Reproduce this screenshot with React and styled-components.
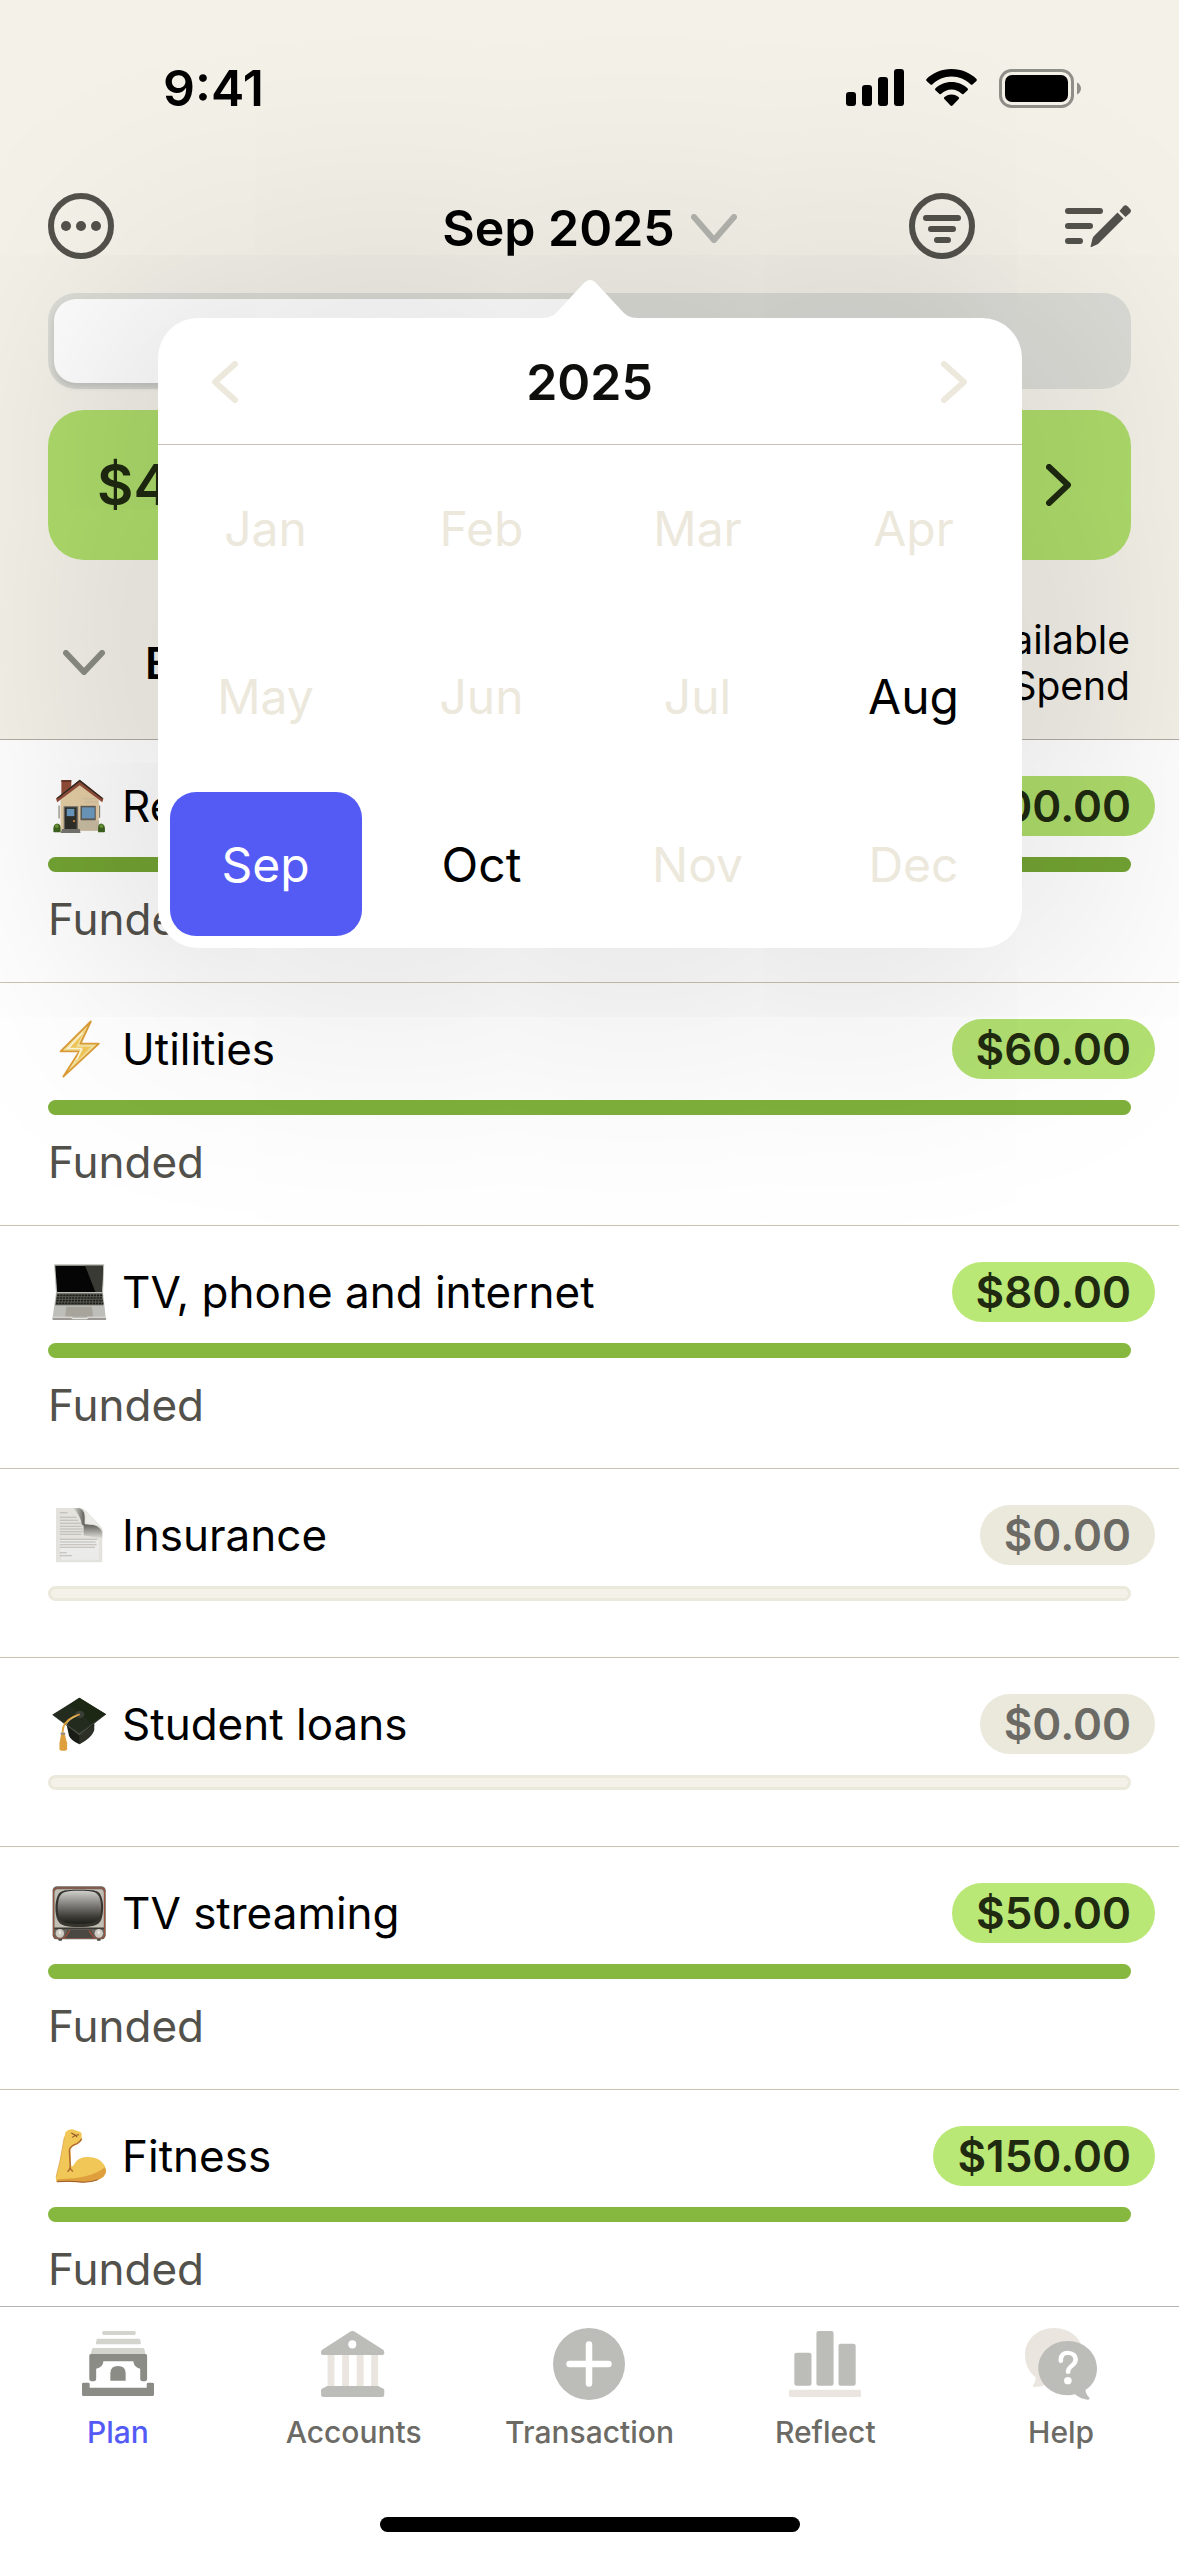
import React, { useState } from 'react';
import styled, { createGlobalStyle, css } from 'styled-components';

const GlobalStyle = createGlobalStyle`
  * {
    box-sizing: border-box;
  }

  body {
    margin: 0;
    font-family: Inter, 'Liberation Sans', sans-serif;
    color: #000;
    background: #fff;
  }

  button {
    padding: 0;
    border: 0;
    background: none;
    font: inherit;
    color: inherit;
    cursor: pointer;
  }

  svg {
    display: block;
    flex: none;
  }
`;

const Screen = styled.div`
  display: flex;
  flex-direction: column;
  height: 100vh;
  overflow: hidden;
`;

const Header = styled.header`
  position: relative;
  z-index: 1;
  flex: none;
  border-bottom: 1px solid #b3aaa2;
  background: #f4f1e9;
`;

const StatusBar = styled.div`
  display: flex;
  align-items: center;
  justify-content: space-between;
  height: 176px;
  padding: 0 98px 0 163px;
`;

const Time = styled.time`
  font-size: 50px;
  font-weight: 600;
  line-height: 60px;
`;

const StatusIcons = styled.div`
  display: flex;
  align-items: center;
  gap: 22px;
`;

const NavBar = styled.nav`
  position: relative;
  z-index: 2;
  display: grid;
  grid-template-columns: 1fr auto 1fr;
  align-items: center;
  height: 100px;
  padding: 0 48px;
`;

const MonthButton = styled.button`
  display: flex;
  align-items: center;
  gap: 16px;
  padding-top: 4px;
  font-size: 50px;
  font-weight: 600;
  line-height: 60px;
`;

const NavActions = styled.div`
  display: flex;
  align-items: center;
  justify-content: ${({ $end }) => ($end ? 'flex-end' : 'flex-start')};
  gap: 90px;
`;

const Popover = styled.div`
  position: absolute;
  top: 142px;
  left: 0;
  right: 0;
  width: 864px;
  max-width: calc(100% - 48px);
  margin: 0 auto;
  border-radius: 40px;
  background: #fff;
  box-shadow: 0 0 330px 42px rgba(0, 0, 0, 0.16);
`;

const PopoverArrow = styled.svg`
  position: absolute;
  top: -38px;
  left: 0;
  right: 0;
  margin: 0 auto;
`;

const YearBar = styled.div`
  display: flex;
  align-items: center;
  justify-content: space-between;
  height: 126px;
  padding: 2px 54px 0;
  box-shadow: 0 1px 0 #c9c0b8;
`;

const Year = styled.h2`
  margin: 0;
  font-size: 50px;
  font-weight: 600;
  line-height: 60px;
  color: #0e0e0c;
`;

const Months = styled.div`
  display: grid;
  grid-template-columns: repeat(4, 1fr);
  gap: 24px;
  padding: 12px;
`;

const Month = styled.button`
  height: 144px;
  border-radius: 26px;
  font-size: 48px;
  color: #000;

  &:disabled {
    color: #ece8dc;
    cursor: default;
  }

  ${({ $selected }) =>
    $selected &&
    css`
      color: #fff;
      background: #545bf5;
    `}
`;

const Segments = styled.div`
  display: grid;
  grid-template-columns: repeat(2, 1fr);
  height: 96px;
  margin: 17px 48px 21px;
  padding: 6px;
  border-radius: 28px;
  background: #dcdcd7;
`;

const Segment = styled.button`
  border-radius: 22px;
  background: ${({ $selected }) => ($selected ? '#fff' : 'transparent')};
  box-shadow: ${({ $selected }) => ($selected ? '0 4px 6px rgba(0, 0, 0, 0.12)' : 'none')};
`;

const Banner = styled.button`
  display: flex;
  align-items: center;
  justify-content: space-between;
  width: calc(100% - 96px);
  height: 150px;
  margin: 0 48px;
  padding: 0 60px 0 49px;
  border-radius: 36px;
  font-size: 56px;
  font-weight: 600;
  color: #1f2a10;
  background: #aedc6b;
`;

const GroupHeader = styled.div`
  display: flex;
  align-items: center;
  justify-content: space-between;
  height: 179px;
  padding: 26px 49px 0 63px;
`;

const GroupToggle = styled.button`
  display: flex;
  align-items: center;
  gap: 40px;
  font-size: 44px;
  font-weight: 600;
`;

const ColumnTitle = styled.div`
  font-size: 39px;
  line-height: 46px;
  text-align: right;
`;

const List = styled.ul`
  flex: 1;
  min-height: 0;
  margin: 0;
  padding: 0;
  overflow-y: auto;
  scrollbar-width: none;
  list-style: none;
`;

const Row = styled.li`
  padding: 36px 24px 36px 48px;
  border-bottom: 1px solid #c9c3b2;
`;

const RowTop = styled.div`
  display: flex;
  align-items: center;
  height: 60px;
  margin-bottom: 21px;
`;

const RowName = styled.span`
  flex: 1;
  margin-left: 14px;
  font-size: 44px;
  line-height: 54px;
`;

const tones = {
  shaded: { pill: '#aedc6b', bar: '#73a433' },
  dim: { pill: '#b2e071', bar: '#7fb03c' },
  funded: { pill: '#bae876', bar: '#86b840' },
};

const Pill = styled.button`
  height: 60px;
  padding: 0 24px;
  border-radius: 30px;
  font-size: 44px;
  font-weight: 600;
  line-height: 60px;
  color: ${({ $tone }) => ($tone ? '#1f2a10' : '#6b6a65')};
  background: ${({ $tone }) => ($tone ? tones[$tone].pill : '#ebe8dc')};
`;

const Bar = styled.div`
  height: 15px;
  margin-right: 24px;
  border-radius: 8px;
  ${({ $tone }) =>
    $tone
      ? css`
          background: ${tones[$tone].bar};
        `
      : css`
          margin-bottom: 20px;
          border: 3px solid #ebe8dc;
          background: #f4f1e9;
        `}
`;

const Caption = styled.p`
  margin: 20px 0 0;
  font-size: 44px;
  line-height: 54px;
  color: #52514b;
`;

const TabBar = styled.nav`
  flex: none;
  border-top: 1px solid #b3b3b0;
  background: #fff;
`;

const Tabs = styled.div`
  display: grid;
  grid-template-columns: repeat(5, 1fr);
  padding: 21px 0 58px;
`;

const Tab = styled.a`
  display: flex;
  flex-direction: column;
  align-items: center;
  gap: 14px;
  font-size: 30px;
  font-weight: 500;
  line-height: 36px;
  text-decoration: none;
  color: ${({ $active }) => ($active ? '#545bf5' : '#6b6a65')};
`;

const HomeIndicator = styled.div`
  width: 420px;
  height: 15px;
  margin: 9px auto 24px;
  border-radius: 8px;
  background: #000;
`;

const Chevron = ({ dir, color, width, height }) => {
  const w = width - 6;
  const h = height - 6;
  const paths = {
    down: `M3 3 L${3 + w / 2} ${3 + h} L${3 + w} 3`,
    right: `M3 3 L${3 + w} ${3 + h / 2} L3 ${3 + h}`,
    left: `M${3 + w} 3 L3 ${3 + h / 2} L${3 + w} ${3 + h}`,
  };
  return (
    <svg width={width} height={height} fill="none" stroke={color} strokeWidth="6" strokeLinecap="round" strokeLinejoin="round">
      <path d={paths[dir]} />
    </svg>
  );
};

const SignalIcon = () => (
  <svg width="58" height="38" viewBox="0 0 58 38">
    <rect x="0" y="23" width="10" height="14" rx="3" />
    <rect x="16" y="16" width="10" height="21" rx="3" />
    <rect x="32" y="8" width="10" height="29" rx="3" />
    <rect x="48" y="0" width="10" height="37" rx="3" />
  </svg>
);

const WifiIcon = () => (
  <svg width="51" height="38" viewBox="0 0 51 38">
    <path d="M25.500 0C35.500 0 44.500 4 50.500 10Q51.200 11 50.400 12L46.500 15.600Q45.500 16.200 44.500 15.300C39.500 10.500 33 7.500 25.500 7.500S11.500 10.500 6.500 15.300Q5.500 16.200 4.500 15.600L.600 12Q-.2 11 .5 10C6.500 4 15.500 0 25.500 0Z" />
    <path d="M25.500 13C32 13 37.500 15.500 41.700 19.500Q42.400 20.400 41.600 21.300L37.500 25Q36.600 25.500 35.700 24.800C33 22.200 29.500 20.500 25.500 20.500S18 22.200 15.300 24.800Q14.400 25.500 13.500 25L9.400 21.300Q8.600 20.400 9.300 19.500C13.500 15.500 19 13 25.500 13Z" />
    <path d="M25.500 25.500C28.500 25.500 31 26.700 32.800 28.300Q33.500 29.200 32.700 30.100L26.500 36.500Q25.500 37.400 24.500 36.500L18.300 30.100Q17.500 29.200 18.200 28.300C20 26.700 22.500 25.500 25.500 25.500Z" />
  </svg>
);

const BatteryIcon = () => (
  <svg width="82" height="39" viewBox="0 0 82 39">
    <rect x="1.500" y="1.500" width="72" height="36" rx="11" fill="none" stroke="#8f8e89" strokeWidth="3" />
    <rect x="6" y="6" width="63" height="27" rx="7" />
    <path d="M78 13.500C80.500 14.500 82 17 82 19.500S80.500 24.500 78 25.500Z" fill="#8f8e89" />
  </svg>
);

const MoreIcon = () => (
  <svg width="66" height="66" viewBox="0 0 66 66" fill="#52514c">
    <circle cx="33" cy="33" r="30" fill="none" stroke="#52514c" strokeWidth="6" />
    <circle cx="18" cy="33" r="5" />
    <circle cx="33" cy="33" r="5" />
    <circle cx="48" cy="33" r="5" />
  </svg>
);

const FilterIcon = () => (
  <svg width="66" height="66" viewBox="0 0 66 66" fill="#52514c">
    <circle cx="33" cy="33" r="30" fill="none" stroke="#52514c" strokeWidth="6" />
    <rect x="14" y="22" width="38" height="6" rx="3" />
    <rect x="19" y="33" width="28" height="6" rx="3" />
    <rect x="25" y="44" width="17" height="6" rx="3" />
  </svg>
);

const EditIcon = () => (
  <svg width="66" height="66" viewBox="0 0 66 66" fill="#52514c">
    <rect x="0" y="15" width="38" height="6" rx="3" />
    <rect x="0" y="30" width="28" height="6" rx="3" />
    <rect x="0" y="45" width="18" height="6" rx="3" />
    <path d="M25.500 54L27.500 45.500Q28 44 29 43L52.500 19.500L58.500 25.500L35 49Q34 50.500 32.500 51.200L26.500 54Z" />
    <path d="M54.500 18L58.500 13.200Q60.500 11.500 62.500 13.200L65.200 16Q66.800 18 65 20L60.500 24Z" />
  </svg>
);

const Emoji = ({ viewBox, label, children }) => (
  <svg width="60" height="60" viewBox={viewBox} preserveAspectRatio="none" role="img" aria-label={label}>
    {children}
  </svg>
);

const HouseEmoji = () => (
  <Emoji viewBox="125 1035 157 157" label="House">
    <path d="M160 1046h26v18l-26 22z" fill="#924c38" />
    <path d="M160 1046h26v4h-26z" fill="#5b2c20" />
    <path d="M158 1098L208 1055L258 1098V1178H158Z" fill="#e3cda5" />
    <path d="M206 1152H258V1178H206Z" fill="#c9bda4" />
    <path d="M146 1094L208 1045L270 1094L267 1104L208 1059L149 1104Z" fill="#924c38" />
    <path d="M146 1094L208 1045L270 1094L264 1093L208 1050L152 1093Z" fill="#2f2c24" />
    <path d="M216 1095h34M220 1103h34" stroke="#c9bda4" strokeWidth="2" />
    <path d="M154 1112v34M260 1112v32" stroke="#8d877b" strokeWidth="3" />
    <rect x="166" y="1114" width="38" height="62" fill="#77716a" />
    <rect x="169" y="1117" width="31" height="57" fill="#30302a" />
    <rect x="174" y="1121" width="20" height="19" fill="#6d9ac0" />
    <circle cx="193" cy="1153" r="3" fill="#d8893c" />
    <rect x="210" y="1113" width="40" height="38" fill="#5f5d58" />
    <rect x="214" y="1117" width="33" height="29" fill="#6d9ac0" />
    <path d="M162 1174H208L210 1184H158Z" fill="#777570" />
    <path d="M139 1181Q137 1160 149 1159Q158 1160 158 1171V1182H141Z" fill="#3f6420" />
    <path d="M274 1181Q276 1160 264 1159Q256 1160 256 1171V1182H272Z" fill="#3f6420" />
    <circle cx="148" cy="1166" r="5" fill="#6c9a35" />
    <circle cx="265" cy="1166" r="5" fill="#6c9a35" />
  </Emoji>
);

const BoltEmoji = () => (
  <Emoji viewBox="125 117 157 180" label="Lightning bolt">
    <path d="M237 124L158 214H207L165 290L258 191H210Z" fill="#f3e3a0" stroke="#dc9d38" strokeWidth="5" strokeLinejoin="round" />
    <path d="M222 149L199 200H238L196 250L217 208H178Z" fill="#f1c75a" />
    <path d="M216 158L178 205H213L200 240" fill="none" stroke="#fbf6d8" strokeWidth="4" />
  </Emoji>
);

const LaptopEmoji = () => (
  <Emoji viewBox="125 846 157 180" label="Laptop">
    <path d="M141 853H272L269 940H146Z" fill="#b9b8b2" />
    <path d="M144 857H269L266 936H149Z" fill="#050505" />
    <path d="M222 857H269L266 936H249Z" fill="#3a3a34" />
    <path d="M146 937H269L276 1014H137Z" fill="#bdbdb9" />
    <path d="M148 940H267L270 976H144Z" fill="#5d5d56" />
    <path d="M149 946H267M148 954H268M147 962H269M146 970H270" stroke="#1d1d19" strokeWidth="5" strokeDasharray="6 2" />
    <path d="M173 980H240L243 1010H170Z" fill="#a7a49c" />
    <path d="M137 1012H186L190 1016H226L230 1012H277V1020H137Z" fill="#9a9993" />
    <path d="M137 1012H186L190 1016H226L230 1012H277" fill="none" stroke="#e5e4df" strokeWidth="3" />
  </Emoji>
);

const PageEmoji = () => (
  <Emoji viewBox="125 135 157 180" label="Page with curl">
    <defs>
      <linearGradient id="curl" x1="0" y1="0" x2="0" y2="1">
        <stop offset="0" stopColor="#5d5d58" />
        <stop offset="1" stopColor="#e2e1dc" />
      </linearGradient>
      <linearGradient id="fold" x1="0" y1="0" x2="1" y2="0">
        <stop offset="0" stopColor="#e2e1dc" />
        <stop offset="1" stopColor="#5d5d58" />
      </linearGradient>
    </defs>
    <path d="M146 144H206Q216 146 221 154L267 207V307H146Z" fill="#e3e2dc" />
    <path d="M154 240H258V299H160Z" fill="#ebebe9" />
    <path d="M156 158h20M156 172h44M156 181h48M156 190h56M156 199h58M156 207h60M156 215h60M156 223h56M156 238h98M156 246h94M156 254h96M156 262h92M156 278h18M156 287h32" stroke="#bab9b3" strokeWidth="3" />
    <path d="M190 144H206Q220 147 221 168V196H214Q210 165 190 144Z" fill="url(#fold)" />
    <path d="M218 192L250 196Q267 202 267 218V236L218 226Z" fill="url(#curl)" />
    <path d="M206 144Q222 149 222 168V192Q258 190 267 216Q267 205 262 199L226 155Q217 145 206 144Z" fill="#ecebe7" stroke="#c7c6c0" strokeWidth="1" />
  </Emoji>
);

const CapEmoji = () => (
  <Emoji viewBox="125 702 157 180" label="Graduation cap">
    <path d="M173 790L246 788V810Q242 826 207 853Q186 842 180 828Z" fill="#181c14" />
    <path d="M207 824V853Q238 834 244 815L246 795Z" fill="#2d3026" />
    <path d="M207 713L277 763L207 824L136 764Z" fill="#232a1e" />
    <path d="M207 713L277 763L240 790L180 735Z" fill="#1d2814" />
    <path d="M136 764L207 820L277 763L207 826Z" fill="#4a4d45" />
    <ellipse cx="208" cy="763" rx="12" ry="11" fill="#3c3e38" />
    <path d="M208 763Q172 776 165 802L163 818" fill="none" stroke="#e1a23c" strokeWidth="5" />
    <path d="M200 768Q178 779 172 796" fill="none" stroke="#f4d98c" strokeWidth="2" />
    <path d="M160 818H168L175 850V869Q165 876 155 869V850Z" fill="#dda03c" />
    <path d="M158 818h12v6h-12z" fill="#8d8a80" />
  </Emoji>
);

const TvEmoji = () => (
  <Emoji viewBox="125 129 157 180" label="Television">
    <defs>
      <linearGradient id="tube" x1="0" y1="0" x2="0" y2="1">
        <stop offset="0" stopColor="#cfcfcc" />
        <stop offset="0.45" stopColor="#7b7a76" />
        <stop offset="0.8" stopColor="#3b3a35" />
        <stop offset="1" stopColor="#20201a" />
      </linearGradient>
    </defs>
    <path d="M150 292h14l-3 10h-8zM251 292h14l-3 10h-8z" fill="#45443e" />
    <rect x="137" y="139" width="139" height="159" rx="12" fill="#6a6760" />
    <rect x="140" y="144" width="133" height="150" rx="9" fill="none" stroke="#9c513d" strokeWidth="3" />
    <path d="M148 148H265Q271 150 271 158V262H142V158Q142 150 148 148Z" fill="#c1beb4" />
    <path d="M207 149C250 149 258 152 264 168C272 190 270 222 264 240C256 258 240 261 207 261C172 261 158 258 150 240C143 222 142 190 150 168C156 152 164 149 207 149Z" fill="#35342e" />
    <path d="M207 152C245 152 252 156 259 170C266 190 265 216 259 233C252 248 238 251 207 251C174 251 162 248 155 233C149 216 149 190 155 170C162 156 170 152 207 152Z" fill="url(#tube)" />
    <path d="M142 264H271V268H142Z" fill="#3c3b35" />
    <path d="M176 270H238L248 294H166Z" fill="#494842" />
    <path d="M182 271L168 294M232 271L246 294" stroke="#9c513d" strokeWidth="4" />
    <ellipse cx="156" cy="280" rx="11" ry="13" fill="#cfccc4" />
    <ellipse cx="258" cy="280" rx="11" ry="13" fill="#cfccc4" />
    <path d="M156 272v10M258 272v10" stroke="#fff" strokeWidth="3" />
  </Emoji>
);

const BicepsEmoji = () => (
  <Emoji viewBox="125 858 157 180" label="Flexed biceps">
    <path
      d="M171 876Q180 866 189 868L210 876Q215 881 213 890L214 900Q210 907 201 913Q186 919 184 930L185 975Q188 985 196 968Q205 951 229 951Q260 952 272 974Q282 996 270 1010Q250 1028 215 1027L148 1025Q145 1024 146 1012L157 960Q163 920 168 890Z"
      fill="#f1c757"
    />
    <path d="M150 1018Q200 1016 225 1008Q255 1000 274 982Q281 998 270 1010Q250 1028 215 1027L148 1025Z" fill="#df9f3c" />
    <path d="M148 1025Q190 1022 215 1027Q238 1027 256 1019" fill="none" stroke="#9a5a2c" strokeWidth="3" />
    <path d="M213 896Q208 907 201 911Q183 918 181 930L183 975Q184 988 176 995M183 985L190 995" fill="none" stroke="#b06a30" strokeWidth="4" />
    <path d="M186 879L197 886L188 892M197 886L206 884M197 886L201 892" fill="none" stroke="#8c5427" strokeWidth="3" />
    <path d="M168 890L157 960L146 1012" fill="none" stroke="#dc9d40" strokeWidth="2" />
  </Emoji>
);

const TabIcon = ({ viewBox, children }) => (
  <svg width="72" height="72" viewBox={viewBox} preserveAspectRatio="none" aria-hidden="true">
    {children}
  </svg>
);

const PlanIcon = () => (
  <TabIcon viewBox="214 84 188 216">
    <rect x="267" y="93" width="87" height="12" rx="4" fill="#d4d4cf" />
    <path d="M255 116H363Q366 116 366 120L368 129Q368 133 364 133H253Q250 133 250 129L252 120Q252 116 255 116Z" fill="#d4d4cf" />
    <path d="M244 144H373Q376 144 377 148L380 163H237L240 148Q241 144 244 144Z" fill="#d4d4cf" />
    <path d="M237 162H380Q384 162 384 167V236Q384 244 375 244Q366 244 366 236V206Q350 204 348 184H270Q268 204 251 206V236Q251 244 242 244Q233 244 233 236V167Q233 162 237 162Z" fill="#8b8c85" />
    <path d="M288 242V220Q288 198 308 198Q328 198 328 220V242Z" fill="#8b8c85" />
    <path d="M218 248H230Q234 248 234 252V263H383V252Q383 248 387 248H398Q402 248 402 252V284Q402 288 398 288H218Q214 288 214 284V252Q214 248 218 248Z" fill="#8b8c85" />
  </TabIcon>
);

const AccountsIcon = () => (
  <TabIcon viewBox="828 84 188 216">
    <path d="M853 160h18v100h-18zM891 160h18v100h-18zM929 160h18v100h-18zM967 160h18v100h-18z" fill="#eae6df" />
    <path d="M914 94Q918 92 922 94L998 149Q1001 152 1001 156V160Q1001 165 996 165H841Q836 165 836 160V156Q836 152 839 149Z" fill="#bcbcb9" />
    <ellipse cx="917.500" cy="133" rx="10.500" ry="12.500" fill="#fff" />
    <path d="M852 258H985L999 266Q1001 268 1001 271V285Q1001 291 995 291H842Q836 291 836 285V271Q836 268 838 266Z" fill="#bcbcb9" />
  </TabIcon>
);

const AddIcon = () => (
  <TabIcon viewBox="0 0 72 72">
    <circle cx="36" cy="36" r="36" fill="#bcbcb9" />
    <path d="M36 16.500V55.500M16.500 36H55.500" stroke="#fff" strokeWidth="6.500" strokeLinecap="round" />
  </TabIcon>
);

const ReflectIcon = () => (
  <TabIcon viewBox="546 84 189 216">
    <g fill="#bcbcb9">
      <rect x="560" y="158" width="45" height="99" rx="6" />
      <rect x="618" y="93" width="45" height="164" rx="6" />
      <rect x="676" y="131" width="45" height="126" rx="6" />
    </g>
    <rect x="546" y="269" width="189" height="22" rx="4" fill="#eae6df" />
  </TabIcon>
);

const HelpIcon = () => (
  <TabIcon viewBox="1162 84 189 216">
    <path d="M1238 84C1282 84 1315 118 1315 164C1315 212 1280 243 1238 243C1222 252 1205 261 1188 261Q1181 261 1184 255Q1191 244 1190 232C1172 216 1162 192 1162 164C1162 118 1196 84 1238 84Z" fill="#eae6df" />
    <path d="M1274 123C1317 123 1351 159 1351 205C1351 232 1340 256 1321 269Q1320 280 1331 293Q1333 300 1326 299Q1308 297 1293 283Q1284 286 1274 286C1231 286 1197 250 1197 205C1197 159 1231 123 1274 123Z" fill="#bcbcb9" />
    <path d="M1256 183V178Q1257 158 1275 158Q1295 160 1295 179Q1294 191 1284 198Q1275 206 1275 216" fill="none" stroke="#fff" strokeWidth="12" strokeLinecap="round" />
    <ellipse cx="1274.500" cy="242" rx="10" ry="11" fill="#fff" />
  </TabIcon>
);

const months = ['Jan', 'Feb', 'Mar', 'Apr', 'May', 'Jun', 'Jul', 'Aug', 'Sep', 'Oct', 'Nov', 'Dec'];
const enabledMonths = ['Aug', 'Sep', 'Oct'];

const categories = [
  { name: 'Rent', Icon: HouseEmoji, amount: '$1,200.00', tone: 'shaded' },
  { name: 'Utilities', Icon: BoltEmoji, amount: '$60.00', tone: 'dim' },
  { name: 'TV, phone and internet', Icon: LaptopEmoji, amount: '$80.00', tone: 'funded' },
  { name: 'Insurance', Icon: PageEmoji, amount: '$0.00' },
  { name: 'Student loans', Icon: CapEmoji, amount: '$0.00' },
  { name: 'TV streaming', Icon: TvEmoji, amount: '$50.00', tone: 'funded' },
  { name: 'Fitness', Icon: BicepsEmoji, amount: '$150.00', tone: 'funded' },
];

const tabs = [
  { name: 'Plan', Icon: PlanIcon },
  { name: 'Accounts', Icon: AccountsIcon },
  { name: 'Transaction', Icon: AddIcon },
  { name: 'Reflect', Icon: ReflectIcon },
  { name: 'Help', Icon: HelpIcon },
];

const MonthPicker = ({ selected, onSelect }) => (
  <Popover role="dialog" aria-label="Choose a month">
    <PopoverArrow width="96" height="39" viewBox="0 0 96 39" fill="#fff">
      <path d="M0 39V38C9 38 12 35 16 31L41 4Q48 -4 55 4L80 31C84 35 87 38 96 38V39Z" />
    </PopoverArrow>
    <YearBar>
      <button type="button" aria-label="Previous year">
        <Chevron dir="left" color="#ece8dc" width={26} height={42} />
      </button>
      <Year>2025</Year>
      <button type="button" aria-label="Next year">
        <Chevron dir="right" color="#ece8dc" width={26} height={42} />
      </button>
    </YearBar>
    <Months>
      {months.map(month => (
        <Month
          key={month}
          type="button"
          disabled={!enabledMonths.includes(month)}
          $selected={month === selected}
          onClick={() => onSelect(month)}>
          {month}
        </Month>
      ))}
    </Months>
  </Popover>
);

const App = () => {
  const [month, setMonth] = useState('Sep');

  return (
    <Screen>
      <GlobalStyle />
      <Header>
        <StatusBar>
          <Time>9:41</Time>
          <StatusIcons>
            <SignalIcon />
            <WifiIcon />
            <BatteryIcon />
          </StatusIcons>
        </StatusBar>

        <NavBar>
          <NavActions>
            <button type="button" aria-label="More">
              <MoreIcon />
            </button>
          </NavActions>
          <MonthButton type="button">
            {month} 2025
            <Chevron dir="down" color="#b4b4af" width={46} height={29} />
          </MonthButton>
          <NavActions $end>
            <button type="button" aria-label="Filter">
              <FilterIcon />
            </button>
            <button type="button" aria-label="Edit plan">
              <EditIcon />
            </button>
          </NavActions>
          <MonthPicker selected={month} onSelect={setMonth} />
        </NavBar>

        <Segments>
          <Segment type="button" aria-label="Plan view" $selected />
          <Segment type="button" aria-label="Spotlight view" />
        </Segments>

        <Banner type="button">
          $40
          <Chevron dir="right" color="#1f2a10" width={25} height={42} />
        </Banner>

        <GroupHeader>
          <GroupToggle type="button">
            <Chevron dir="down" color="#8b8d85" width={42} height={25} />
            Bills
          </GroupToggle>
          <ColumnTitle>
            Available
            <br />
            to Spend
          </ColumnTitle>
        </GroupHeader>
      </Header>

      <List>
        {categories.map(({ name, Icon, amount, tone }) => (
          <Row key={name}>
            <RowTop>
              <Icon />
              <RowName>{name}</RowName>
              <Pill type="button" $tone={tone}>
                {amount}
              </Pill>
            </RowTop>
            <Bar $tone={tone} />
            {tone && <Caption>Funded</Caption>}
          </Row>
        ))}
      </List>

      <TabBar>
        <Tabs>
          {tabs.map(({ name, Icon }) => (
            <Tab key={name} href={`#${name.toLowerCase()}`} $active={name === 'Plan'}>
              <Icon />
              {name}
            </Tab>
          ))}
        </Tabs>
        <HomeIndicator />
      </TabBar>
    </Screen>
  );
};

export default App;
